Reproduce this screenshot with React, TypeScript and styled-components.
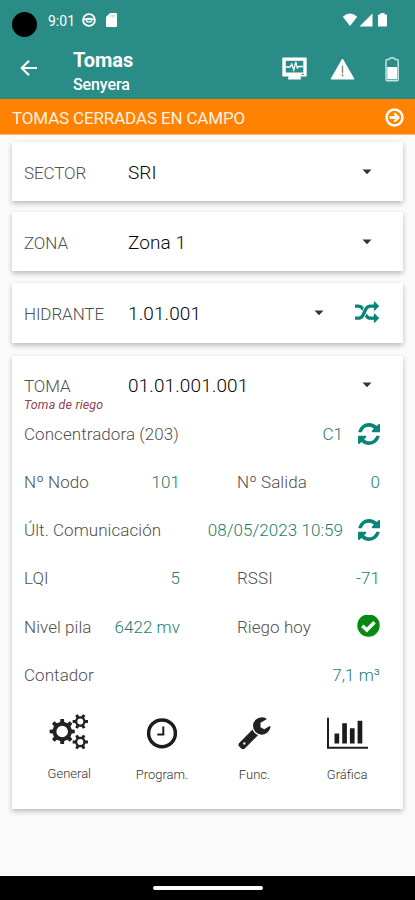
import React from 'react';
import styled, { createGlobalStyle } from 'styled-components';

const TEAL = '#2a8c87';
const VALUE = '#1c7d6c';

const GlobalStyle = createGlobalStyle`
  * { box-sizing: border-box; }
  body { margin: 0; background: #fafafa; font-family: Roboto, "Liberation Sans", sans-serif; }
  svg { display: block; flex: none; }
`;

const Screen = styled.main`
  width: 415px;
  height: 900px;
  display: flex;
  flex-direction: column;
  overflow: hidden;
  background: #fafafa;
`;

const StatusBar = styled.div`
  height: 40px;
  flex: none;
  display: flex;
  align-items: center;
  padding: 0 27px 0 12px;
  background: ${TEAL};
  color: #fff;
`;

const Camera = styled.span`
  width: 25px;
  height: 25px;
  border-radius: 50%;
  background: #000;
  margin-top: 9px;
`;

const Clock = styled.span`
  width: 34px;
  margin: 1px 0 0 11px;
  font-size: 14px;
`;

const StatusIcons = styled.div<{ $end?: boolean }>`
  display: flex;
  align-items: center;
  gap: ${(p) => (p.$end ? '0' : '10px')};
  margin-left: ${(p) => (p.$end ? 'auto' : '0')};
`;

const AppBar = styled.header`
  height: 59px;
  flex: none;
  display: flex;
  align-items: center;
  padding: 0 16px 0 20px;
  background: ${TEAL};
  color: #fff;
`;

const BackButton = styled.span`
  margin-bottom: 3px;
`;

const Titles = styled.div`
  margin: 4px auto 0 35px;
`;

const Title = styled.h1`
  margin: 0;
  font-size: 20px;
  line-height: 25px;
  font-weight: 700;
`;

const Subtitle = styled.div`
  font-size: 16px;
  line-height: 23px;
  font-weight: 500;
  letter-spacing: -0.1px;
`;

const Actions = styled.div`
  display: flex;
  align-items: center;
  margin-top: -1px;
`;

const Banner = styled.div`
  height: 36px;
  flex: none;
  display: flex;
  align-items: center;
  justify-content: space-between;
  padding: 1px 11px 0 12px;
  background: #ff8200;
  border-bottom: 1px solid #ffb774;
  color: #fff2e4;
  font-size: 17px;
  letter-spacing: -0.15px;
`;

const BannerText = styled.span`
  margin-top: 2px;
`;

const Content = styled.div`
  flex: 1;
  display: flex;
  flex-direction: column;
  padding: 7px 12px 0;
`;

const Card = styled.section<{ $gap?: number }>`
  margin-bottom: ${(p) => p.$gap ?? 0}px;
  background: #fff;
  box-shadow: 0 3px 5px rgba(0, 0, 0, 0.18), 0 1px 5px rgba(0, 0, 0, 0.09);
`;

const SelectRow = styled.div<{ $height: number }>`
  height: ${(p) => p.$height}px;
  display: flex;
  align-items: center;
  padding: 2px 24px 0 12px;
`;

const Label = styled.span<{ $spacing?: number }>`
  font-size: 17px;
  line-height: 20px;
  font-weight: 300;
  color: #505050;
  white-space: nowrap;
  letter-spacing: ${(p) => p.$spacing ?? 0.06}px;
`;

const SelectLabel = styled(Label)`
  width: 104px;
  letter-spacing: -0.1px;
`;

const SelectValue = styled.span`
  flex: 1;
  font-size: 19px;
  line-height: 22px;
  font-weight: 300;
  color: #050505;
  letter-spacing: 0.1px;
`;

const CaretBox = styled.span<{ $right: number }>`
  margin: -2px ${(p) => p.$right}px 0 0;
`;

const OutletKind = styled.div`
  height: 14px;
  margin: -16px 0 -2px;
  padding-left: 12px;
  font-size: 12.5px;
  line-height: 14px;
  letter-spacing: 0.15px;
  font-style: italic;
  color: #8a4550;
`;

const DetailRow = styled.div`
  height: 48.15px;
  display: flex;
  align-items: center;
  padding: 0 23px 0 12px;
`;

const Pair = styled.div<{ $width?: number }>`
  width: ${(p) => (p.$width ? `${p.$width}px` : 'auto')};
  flex: ${(p) => (p.$width ? 'none' : '1')};
  display: flex;
  align-items: center;
  justify-content: space-between;
  margin-right: ${(p) => (p.$width ? '57px' : '0')};
`;

const Value = styled(Label)`
  color: ${VALUE};
`;

const WithIcon = styled.span`
  display: flex;
  align-items: center;
  gap: 15px;
`;

const Tabs = styled.nav`
  height: 110px;
  display: grid;
  grid-template-columns: repeat(4, 92.6px);
  padding: 14px 0 0 11px;
`;

const Tab = styled.div`
  display: flex;
  flex-direction: column;
  align-items: center;
`;

const TabLabel = styled.span<{ $top?: number }>`
  margin-top: ${(p) => p.$top ?? 16}px;
  font-size: 13px;
  line-height: 16px;
  font-weight: 300;
  color: #333;
`;

const NavBar = styled.footer`
  height: 24px;
  flex: none;
  display: flex;
  align-items: center;
  justify-content: center;
  background: #000;
`;

const Handle = styled.span`
  width: 110px;
  height: 4px;
  border-radius: 2px;
  background: #fff;
`;

const REFRESH =
  'M1639 1056q0 5-1 7-64 268-268 434.5t-478 166.5q-146 0-282.5-55t-243.5-157l-129 129q-19 19-45 19t-45-19-19-45v-448q0-26 19-45t45-19h448q26 0 45 19t19 45-19 45l-137 137q71 66 161 102t187 36q134 0 250-65t186-179q11-17 53-117 8-23 30-23h192q13 0 22.5 9.5t9.5 22.5zm25-800v448q0 26-19 45t-45 19h-448q-26 0-45-19t-19-45 19-45l138-138q-148-137-349-137-134 0-250 65t-186 179q-11 17-53 117-8 23-30 23h-199q-13 0-22.5-9.5t-9.5-22.5v-7q65-268 270-434.5t480-166.5q146 0 284 55.5t245 156.5l130-129q19-19 45-19t45 19 19 45z';

const SHUFFLE =
  'M666 481q-60 92-137 273-22-45-37-72.5t-40.5-63.5-51-56.5-63-35-81.5-14.5h-224q-14 0-23-9t-9-23v-192q0-14 9-23t23-9h224q250 0 410 225zm1126 799q0 14-9 23l-320 320q-9 9-23 9-13 0-22.5-9.5t-9.5-22.5v-192q-32 0-85 .5t-81 1-73-1-71-5-64-10.5-63-18.5-58-28.5-59-40-55-53.5-56-69.5q59-93 136-273 22 45 37 72.5t40.5 63.5 51 56.5 63 35 81.5 14.5h256v-192q0-14 9-23t23-9q12 0 24 10l319 319q9 9 9 23zm0-896q0 14-9 23l-320 320q-9 9-23 9-13 0-22.5-9.5t-9.5-22.5v-192h-256q-48 0-87 15t-69 45-51 61.5-45 77.5q-32 62-78 171-29 66-49.5 111t-54 105-64 100-74 83-90 68.5-106.5 42-128 16.5h-224q-14 0-23-9t-9-23v-192q0-14 9-23t23-9h224q48 0 87-15t69-45 51-61.5 45-77.5q32-62 78-171 29-66 49.5-111t54-105 64-100 74-83 90-68.5 106.5-42 128-16.5h256v-192q0-14 9-23t23-9q12 0 24 10l319 319q9 9 9 23z';

const WRENCH =
  'M448 1472q0-26-19-45t-45-19-45 19-19 45 19 45 45 19 45-19 19-45zm644-420l-682 682q-37 37-90 37-52 0-91-37l-106-108q-38-36-38-90 0-53 38-91l681-681q39 98 114.5 173.5t173.5 114.5zm634-435q0 39-23 106-47 134-164.5 217.5t-258.5 83.5q-185 0-316.5-131.5t-131.5-316.5 131.5-316.5 316.5-131.5q58 0 121.5 16.5t107.5 46.5q16 11 16 28t-16 28l-293 169v224l193 107q5-3 79-48.5t135.5-81 70.5-35.5q15 0 23.5 10t8.5 25z';

/** Outline of a toothed wheel with a round hole. */
function gear(cx: number, cy: number, outer: number, inner: number, hole: number, teeth: number) {
  const step = (Math.PI * 2) / teeth;
  const pts: string[] = [];
  for (let i = 0; i < teeth; i++) {
    const a = i * step;
    const corners: [number, number][] = [
      [inner, -0.27],
      [outer, -0.18],
      [outer, 0.18],
      [inner, 0.27],
    ];
    corners.forEach(([r, o]) => {
      const t = a + o * step;
      pts.push(`${(cx + r * Math.cos(t)).toFixed(2)} ${(cy + r * Math.sin(t)).toFixed(2)}`);
    });
  }
  return `M${pts.join('L')}ZM${cx + hole} ${cy}a${hole} ${hole} 0 1 0 ${-2 * hole} 0a${hole} ${hole} 0 1 0 ${2 * hole} 0Z`;
}

const GearsIcon = () => (
  <svg width="40" height="38" viewBox="0 0 40 38" fill="#222" fillRule="evenodd">
    <path d={gear(13.2, 18.5, 12.7, 9.8, 5.8, 8)} />
    <path d={gear(31.3, 8.5, 7.8, 5.4, 3, 6)} />
    <path d={gear(31.3, 29, 7.8, 5.4, 3, 6)} />
  </svg>
);

const ClockIcon = () => (
  <svg width="38" height="38" viewBox="0 0 38 38" fill="none" stroke="#1c1c1c">
    <circle cx="19" cy="20.3" r="13.4" strokeWidth="3.5" />
    <path d="M20.3 13.500v8h-6" strokeWidth="2" />
  </svg>
);

const WrenchIcon = () => (
  <svg width="38" height="38" viewBox="0 0 38 38" fill="#222">
    <g transform="translate(1.8 1.7) scale(.0195)">
      <path d={WRENCH} />
    </g>
  </svg>
);

const ChartIcon = () => (
  <svg width="42" height="38" viewBox="0 0 42 38" fill="#1c1c1c">
    <path d="M1 4.7h2v29h39v2H1zM8.500 20.500h4.700v10H8.500zM16.200 10.300h4.700v20.200h-4.700zM23.900 15.300h4.700v15.200h-4.700zM31.600 7.700h4.700v22.800h-4.700z" />
  </svg>
);

const Caret = ({ right = 0 }: { right?: number }) => (
  <CaretBox $right={right}>
    <svg width="10" height="6" viewBox="0 0 10 6" fill="#333">
      <path d="M.5.5h9L5 5.200z" />
    </svg>
  </CaretBox>
);

const RefreshIcon = () => (
  <svg width="22" height="22" viewBox="128 128 1536 1536" fill="#0b8478">
    <path d={REFRESH} />
  </svg>
);

const CheckIcon = () => (
  <svg width="24" height="24" viewBox="0 0 24 24">
    <circle cx="12.500" cy="10.500" r="11.200" fill="#078a12" />
    <path d="M6.300 10.700l4.500 4.300 7.700-7.800" fill="none" stroke="#fff" strokeWidth="3.500" />
  </svg>
);

const App = () => (
  <Screen>
    <GlobalStyle />
    <StatusBar>
      <Camera />
      <Clock>9:01</Clock>
      <StatusIcons>
        <svg width="14" height="14" viewBox="0 0 14 14" fill="none" stroke="#fff">
          <circle cx="7" cy="7" r="5.900" strokeWidth="1.900" />
          <path d="M1.500 6.200h11" strokeWidth="1.600" />
          <rect x="4.400" y="5.500" width="5.200" height="3.400" rx="1.500" strokeWidth="1.400" />
        </svg>
        <svg width="11" height="14" viewBox="0 0 11 14" fill="#fff">
          <path d="M4 0h6q1 0 1 1v12q0 1-1 1H1q-1 0-1-1V4z" />
          <path d="M4.400 2v2.500M6.500 2v2.500M8.600 2v2.500" stroke="#a5ceca" strokeWidth=".8" />
        </svg>
      </StatusIcons>
      <StatusIcons $end>
        <svg width="46" height="14" viewBox="0 0 46 14" fill="#fff">
          <path d="M.8 3.800Q8-2.800 15.200 3.800L8 12.900z" />
          <path d="M30.500.5v13H17.500z" />
          <path d="M38.500 0h4v1.500h1.800q.7 0 .7.700v10.600q0 .7-.7.700h-7.600q-.7 0-.7-.7V2.200q0-.7.700-.7h1.800z" />
        </svg>
      </StatusIcons>
    </StatusBar>
    <AppBar>
      <BackButton>
        <svg width="18" height="18" viewBox="0 0 18 18" fill="none" stroke="#fff" strokeWidth="2">
          <path d="M17 9H2M9 1.700L1.700 9 9 16.300" />
        </svg>
      </BackButton>
      <Titles>
        <Title>Tomas</Title>
        <Subtitle>Senyera</Subtitle>
      </Titles>
      <Actions>
        <svg width="25" height="24" viewBox="0 0 25 24">
          <path d="M1 .5h23q.7 0 .7.700v17.600q0 .7-.7.700h-5.500l.5 3H6l.5-3H1q-.7 0-.7-.7V1.200Q.3.500 1 .5z" fill="#fff" />
          <rect x="3.800" y="3.800" width="17.500" height="11.700" fill={TEAL} />
          <path d="M4 10h4l1.800-3 2 6 2-8 1.500 6 1.500-1.500H21" fill="none" stroke="#fff" strokeWidth="1.300" />
          <path d="M19.500 17.300h2.500" stroke={TEAL} strokeWidth="1" />
        </svg>
        <svg width="72" height="24" viewBox="0 0 72 24">
          <path d="M35.500 2L47 22H24z" fill="#fff" stroke="#fff" strokeLinejoin="round" />
          <path d="M35.500 8.500v7.500M35.500 17v2.500" stroke="#77827f" strokeWidth="1.300" />
        </svg>
        <svg width="20" height="26" viewBox="7 0 20 26">
          <path d="M17 3.600L18.200 2h3.800l1.200 1.600h1.600q1.400 0 1.400 1.400v18.500q0 1.200-1.200 1.200h-9.800q-1.200 0-1.200-1.200V5q0-1.400 1.400-1.400z" fill="none" stroke="#c5e2df" strokeWidth="1.500" />
          <rect x="15.200" y="11" width="9.900" height="12.300" fill="#fff" />
        </svg>
      </Actions>
    </AppBar>
    <Banner>
      <BannerText>TOMAS CERRADAS EN CAMPO</BannerText>
      <svg width="19" height="19" viewBox="0 0 19 19" fill="none" stroke="#fff">
        <circle cx="9.500" cy="9.500" r="8" strokeWidth="2.500" />
        <path d="M4.500 9.500h7" strokeWidth="2.800" />
        <path d="M9.300 5.300l4.200 4.200-4.200 4.200" strokeWidth="2.300" />
      </svg>
    </Banner>
    <Content>
      <Card $gap={11}>
        <SelectRow $height={59}>
          <SelectLabel>SECTOR</SelectLabel>
          <SelectValue>SRI</SelectValue>
          <Caret right={7} />
        </SelectRow>
      </Card>
      <Card $gap={12}>
        <SelectRow $height={59}>
          <SelectLabel>ZONA</SelectLabel>
          <SelectValue>Zona 1</SelectValue>
          <Caret right={7} />
        </SelectRow>
      </Card>
      <Card $gap={13}>
        <SelectRow $height={60}>
          <SelectLabel>HIDRANTE</SelectLabel>
          <SelectValue>1.01.001</SelectValue>
          <Caret right={31} />
          <svg width="24" height="26" viewBox="0 0 1792 1941" fill="#0b8478">
            <path d={SHUFFLE} />
          </svg>
        </SelectRow>
      </Card>
      <Card>
        <SelectRow $height={58}>
          <SelectLabel>TOMA</SelectLabel>
          <SelectValue>01.01.001.001</SelectValue>
          <Caret right={7} />
        </SelectRow>
        <OutletKind>Toma de riego</OutletKind>
        <div>
          <DetailRow>
            <Pair>
              <Label>Concentradora (203)</Label>
              <WithIcon><Value>C1</Value><RefreshIcon /></WithIcon>
            </Pair>
          </DetailRow>
          <DetailRow>
            <Pair $width={156}><Label>Nº Nodo</Label><Value>101</Value></Pair>
            <Pair><Label>Nº Salida</Label><Value>0</Value></Pair>
          </DetailRow>
          <DetailRow>
            <Pair>
              <Label>Últ. Comunicación</Label>
              <WithIcon><Value>08/05/2023 10:59</Value><RefreshIcon /></WithIcon>
            </Pair>
          </DetailRow>
          <DetailRow>
            <Pair $width={156}><Label>LQI</Label><Value>5</Value></Pair>
            <Pair><Label>RSSI</Label><Value>-71</Value></Pair>
          </DetailRow>
          <DetailRow>
            <Pair $width={156}><Label>Nivel pila</Label><Value>6422 mv</Value></Pair>
            <Pair><Label>Riego hoy</Label><CheckIcon /></Pair>
          </DetailRow>
          <DetailRow>
            <Pair><Label>Contador</Label><Value>7,1 m³</Value></Pair>
          </DetailRow>
        </div>
        <Tabs>
          <Tab><GearsIcon /><TabLabel $top={15}>General</TabLabel></Tab>
          <Tab><ClockIcon /><TabLabel>Program.</TabLabel></Tab>
          <Tab><WrenchIcon /><TabLabel>Func.</TabLabel></Tab>
          <Tab><ChartIcon /><TabLabel>Gráfica</TabLabel></Tab>
        </Tabs>
      </Card>
    </Content>
    <NavBar><Handle /></NavBar>
  </Screen>
);

export default App;
